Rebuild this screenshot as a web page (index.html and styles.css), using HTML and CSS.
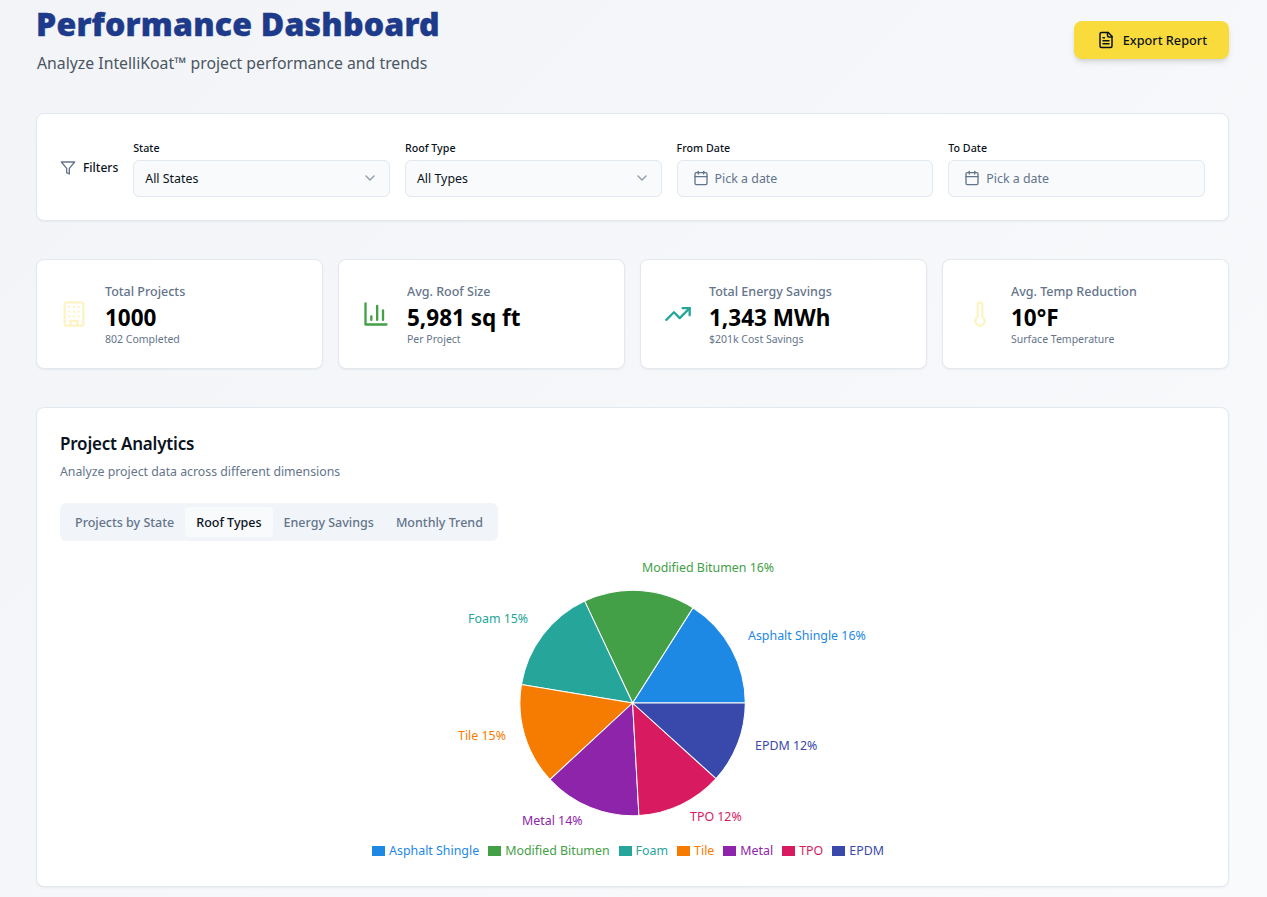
FILE: index.html
```html
<!DOCTYPE html>
<html lang="en">
<head>
    <meta charset="UTF-8">
    <meta name="viewport" content="width=device-width, initial-scale=1.0">
    <title>Performance Dashboard</title>
    <link rel="stylesheet" href="styles.css">
</head>
<body>
    <div class="page">
        <header class="page-header">
            <div>
                <h1>Performance Dashboard</h1>
                <p class="subtitle">Analyze IntelliKoat™ project performance and trends</p>
            </div>
            <button class="export-btn">
                <svg class="icon icon-lg" viewBox="0 0 24 24"><path d="M15 2H6a2 2 0 0 0-2 2v16a2 2 0 0 0 2 2h12a2 2 0 0 0 2-2V7Z"/><path d="M14 2v4a2 2 0 0 0 2 2h4"/><path d="M10 9H8"/><path d="M16 13H8"/><path d="M16 17H8"/></svg>
                Export Report
            </button>
        </header>

        <section class="card filters">
            <div class="filters-label">
                <svg class="icon icon-muted" viewBox="0 0 24 24"><polygon points="22 3 2 3 10 12.46 10 19 14 21 14 12.46 22 3"/></svg>
                <span>Filters</span>
            </div>
            <div class="filter-grid">
                <div class="field">
                    <label>State</label>
                    <div class="control">
                        <span>All States</span>
                        <svg class="icon chevron" viewBox="0 0 24 24"><path d="m6 9 6 6 6-6"/></svg>
                    </div>
                </div>
                <div class="field">
                    <label>Roof Type</label>
                    <div class="control">
                        <span>All Types</span>
                        <svg class="icon chevron" viewBox="0 0 24 24"><path d="m6 9 6 6 6-6"/></svg>
                    </div>
                </div>
                <div class="field">
                    <label>From Date</label>
                    <div class="control control-date">
                        <svg class="icon icon-muted" viewBox="0 0 24 24"><path d="M8 2v4"/><path d="M16 2v4"/><rect x="3" y="4" width="18" height="18" rx="2"/><path d="M3 10h18"/></svg>
                        <span>Pick a date</span>
                    </div>
                </div>
                <div class="field">
                    <label>To Date</label>
                    <div class="control control-date">
                        <svg class="icon icon-muted" viewBox="0 0 24 24"><path d="M8 2v4"/><path d="M16 2v4"/><rect x="3" y="4" width="18" height="18" rx="2"/><path d="M3 10h18"/></svg>
                        <span>Pick a date</span>
                    </div>
                </div>
            </div>
        </section>

        <section class="stats">
            <div class="card stat">
                <svg class="stat-icon pale" viewBox="0 0 24 24"><rect x="4" y="2" width="16" height="20" rx="2"/><path d="M9 22v-4h6v4"/><path d="M8 6h.01"/><path d="M16 6h.01"/><path d="M12 6h.01"/><path d="M12 10h.01"/><path d="M12 14h.01"/><path d="M16 10h.01"/><path d="M16 14h.01"/><path d="M8 10h.01"/><path d="M8 14h.01"/></svg>
                <div>
                    <p class="stat-label">Total Projects</p>
                    <p class="stat-value">1000</p>
                    <p class="stat-sub">802 Completed</p>
                </div>
            </div>
            <div class="card stat">
                <svg class="stat-icon green" viewBox="0 0 24 24"><path d="M3 3v18h18"/><path d="M18 17V9"/><path d="M13 17V5"/><path d="M8 17v-3"/></svg>
                <div>
                    <p class="stat-label">Avg. Roof Size</p>
                    <p class="stat-value">5,981 sq ft</p>
                    <p class="stat-sub">Per Project</p>
                </div>
            </div>
            <div class="card stat">
                <svg class="stat-icon teal" viewBox="0 0 24 24"><polyline points="22 7 13.5 15.5 8.5 10.5 2 17"/><polyline points="16 7 22 7 22 13"/></svg>
                <div>
                    <p class="stat-label">Total Energy Savings</p>
                    <p class="stat-value">1,343 MWh</p>
                    <p class="stat-sub">$201k Cost Savings</p>
                </div>
            </div>
            <div class="card stat">
                <svg class="stat-icon pale" viewBox="0 0 24 24"><path d="M14 4v10.54a4 4 0 1 1-4 0V4a2 2 0 0 1 4 0Z"/></svg>
                <div>
                    <p class="stat-label">Avg. Temp Reduction</p>
                    <p class="stat-value">10°F</p>
                    <p class="stat-sub">Surface Temperature</p>
                </div>
            </div>
        </section>

        <section class="card analytics">
            <h2>Project Analytics</h2>
            <p class="analytics-sub">Analyze project data across different dimensions</p>
            <div class="tabs">
                <span class="tab">Projects by State</span>
                <span class="tab active">Roof Types</span>
                <span class="tab">Energy Savings</span>
                <span class="tab">Monthly Trend</span>
            </div>
            <svg class="pie" viewBox="-573 -146 1145 285">
                <g stroke="#fff" stroke-width="1" transform="translate(-0.4 0) scale(1.006)">
                    <path fill="#1e88e5" d="M0 0L112 0A112 112 0 0 0 60 -94.6Z"/>
                    <path fill="#43a047" d="M0 0L60 -94.6A112 112 0 0 0 -47.7 -101.3Z"/>
                    <path fill="#26a69a" d="M0 0L-47.7 -101.3A112 112 0 0 0 -110.5 -18.3Z"/>
                    <path fill="#f57c00" d="M0 0L-110.5 -18.3A112 112 0 0 0 -82.2 76.1Z"/>
                    <path fill="#8e24aa" d="M0 0L-82.2 76.1A112 112 0 0 0 6.3 111.8Z"/>
                    <path fill="#d81b60" d="M0 0L6.3 111.8A112 112 0 0 0 83 75.2Z"/>
                    <path fill="#3949ab" d="M0 0L83 75.2A112 112 0 0 0 112 0Z"/>
                </g>
                <g class="pie-labels">
                    <text x="115" y="-63" fill="#1e88e5">Asphalt Shingle 16%</text>
                    <text x="9" y="-131" fill="#43a047">Modified Bitumen 16%</text>
                    <text x="-165" y="-80" fill="#26a69a">Foam 15%</text>
                    <text x="-175" y="37" fill="#f57c00">Tile 15%</text>
                    <text x="-111" y="122" fill="#8e24aa">Metal 14%</text>
                    <text x="57" y="118" fill="#d81b60">TPO 12%</text>
                    <text x="122" y="47" fill="#3949ab">EPDM 12%</text>
                </g>
            </svg>
            <ul class="legend">
                <li class="blue"><i></i>Asphalt Shingle</li>
                <li class="green"><i></i>Modified Bitumen</li>
                <li class="teal"><i></i>Foam</li>
                <li class="orange"><i></i>Tile</li>
                <li class="purple"><i></i>Metal</li>
                <li class="pink"><i></i>TPO</li>
                <li class="indigo"><i></i>EPDM</li>
            </ul>
        </section>
    </div>
</body>
</html>
```

FILE: styles.css
```css
* {
    box-sizing: border-box;
}
body {
    font-family: "Noto Sans", "Open Sans", sans-serif;
    margin: 0;
    background: linear-gradient(135deg, #f2f4f7 0%, #f9fafc 100%);
    color: #0b1220;
    min-height: 897px;
}
p, h1, h2, ul {
    margin: 0;
    padding: 0;
}
.page {
    padding: 0 38px 10px 36px;
}
.icon {
    width: 16px;
    height: 16px;
    fill: none;
    stroke: currentColor;
    stroke-width: 2;
    stroke-linecap: round;
    stroke-linejoin: round;
    flex-shrink: 0;
}
.icon-lg {
    width: 18px;
    height: 18px;
}
.icon-muted {
    color: #64748b;
}
.page-header {
    display: flex;
    justify-content: space-between;
    align-items: flex-start;
    height: 113px;
}
h1 {
    font-size: 32px;
    line-height: 48px;
    font-weight: 900;
    letter-spacing: 0.2px;
    color: #1e3a8a;
    -webkit-text-stroke: 0.4px #1e3a8a;
}
.subtitle {
    font-size: 15.8px;
    line-height: 24px;
    margin: 3px 0 0 1px;
    color: #4b5563;
}
.export-btn {
    display: flex;
    align-items: center;
    gap: 8px;
    height: 38px;
    margin-top: 21px;
    padding: 0 22px 0 23px;
    border: none;
    border-radius: 8px;
    background-color: #f9db3b;
    color: #0b1220;
    font: 500 12.7px "Noto Sans", sans-serif;
    box-shadow: 0 4px 6px -1px rgba(0, 0, 0, 0.12), 0 2px 4px -2px rgba(0, 0, 0, 0.1);
}
.card {
    background-color: #ffffff;
    border: 1px solid #e2e8f0;
    border-radius: 8px;
    box-shadow: 0 1px 2px rgba(0, 0, 0, 0.05);
}
.filters {
    display: flex;
    align-items: center;
    gap: 15px;
    height: 108px;
    padding: 0 23px;
}
.filters-label {
    display: flex;
    align-items: center;
    gap: 7px;
    font-size: 12px;
    font-weight: 500;
    padding-top: 1px;
}
.filter-grid {
    flex: 1;
    display: grid;
    grid-template-columns: repeat(4, 1fr);
    gap: 15px;
    padding-top: 2px;
}
.field label {
    display: block;
    font-size: 10.7px;
    line-height: 16px;
    font-weight: 500;
    margin-bottom: 4px;
}
.control {
    display: flex;
    align-items: center;
    justify-content: space-between;
    height: 37px;
    padding: 0 11px;
    background-color: #f8fafc;
    border: 1px solid #e2e8f0;
    border-radius: 6px;
    font-size: 12.4px;
}
.control-date {
    justify-content: flex-start;
    gap: 6px;
    padding-left: 15px;
    color: #64748b;
}
.chevron {
    color: #64748b;
    opacity: 0.7;
}
.stats {
    display: grid;
    grid-template-columns: repeat(4, 287px);
    gap: 15px;
    margin-top: 38px;
}
.stat {
    display: flex;
    align-items: center;
    gap: 17px;
    height: 110px;
    padding: 0 23px;
}
.stat-icon {
    width: 28px;
    height: 32px;
    fill: none;
    stroke-width: 2;
    stroke-linecap: round;
    stroke-linejoin: round;
    flex-shrink: 0;
}
.stat-icon.pale {
    stroke: #fdf3c4;
}
.stat-icon.green {
    stroke: #43a047;
}
.stat-icon.teal {
    stroke: #26a69a;
}
.stat-label {
    font-size: 12.5px;
    line-height: 18px;
    font-weight: 500;
    margin-top: 2px;
    color: #64748b;
}
.stat-value {
    font-size: 22.5px;
    line-height: 32px;
    font-weight: 700;
    margin-top: 1px;
    color: #000000;
}
.stat-sub {
    font-size: 10.5px;
    line-height: 16px;
    margin-top: -3px;
    color: #64748b;
}
.analytics {
    margin-top: 38px;
    height: 480px;
    padding: 23px 23px 0;
}
h2 {
    font-size: 17px;
    line-height: 26px;
    font-weight: 600;
    letter-spacing: -0.2px;
}
.analytics-sub {
    font-size: 12.3px;
    line-height: 18px;
    margin-top: 6px;
    color: #64748b;
}
.tabs {
    display: inline-flex;
    align-items: center;
    height: 38px;
    margin-top: 22px;
    padding: 0 4px;
    background-color: #f1f5f9;
    border-radius: 6px;
}
.tab {
    padding: 1px 11px 0;
    line-height: 29px;
    font-size: 12.5px;
    font-weight: 500;
    color: #64748b;
    border-radius: 4px;
}
.tab.active {
    background-color: #f8fafc;
    color: #0b1220;
}
.pie {
    display: block;
    width: 100%;
    height: 285px;
    margin-top: 16px;
}
.pie-labels text {
    font-size: 12.4px;
}
.legend {
    display: flex;
    justify-content: center;
    gap: 9px;
    padding-right: 9px;
    list-style: none;
    font-size: 12.4px;
    line-height: 18px;
}
.legend li {
    display: flex;
    align-items: center;
    gap: 4px;
}
.legend i {
    width: 13px;
    height: 10px;
    background-color: currentColor;
}
.legend .blue { color: #1e88e5; }
.legend .green { color: #43a047; }
.legend .teal { color: #26a69a; }
.legend .orange { color: #f57c00; }
.legend .purple { color: #8e24aa; }
.legend .pink { color: #d81b60; }
.legend .indigo { color: #3949ab; }
```
